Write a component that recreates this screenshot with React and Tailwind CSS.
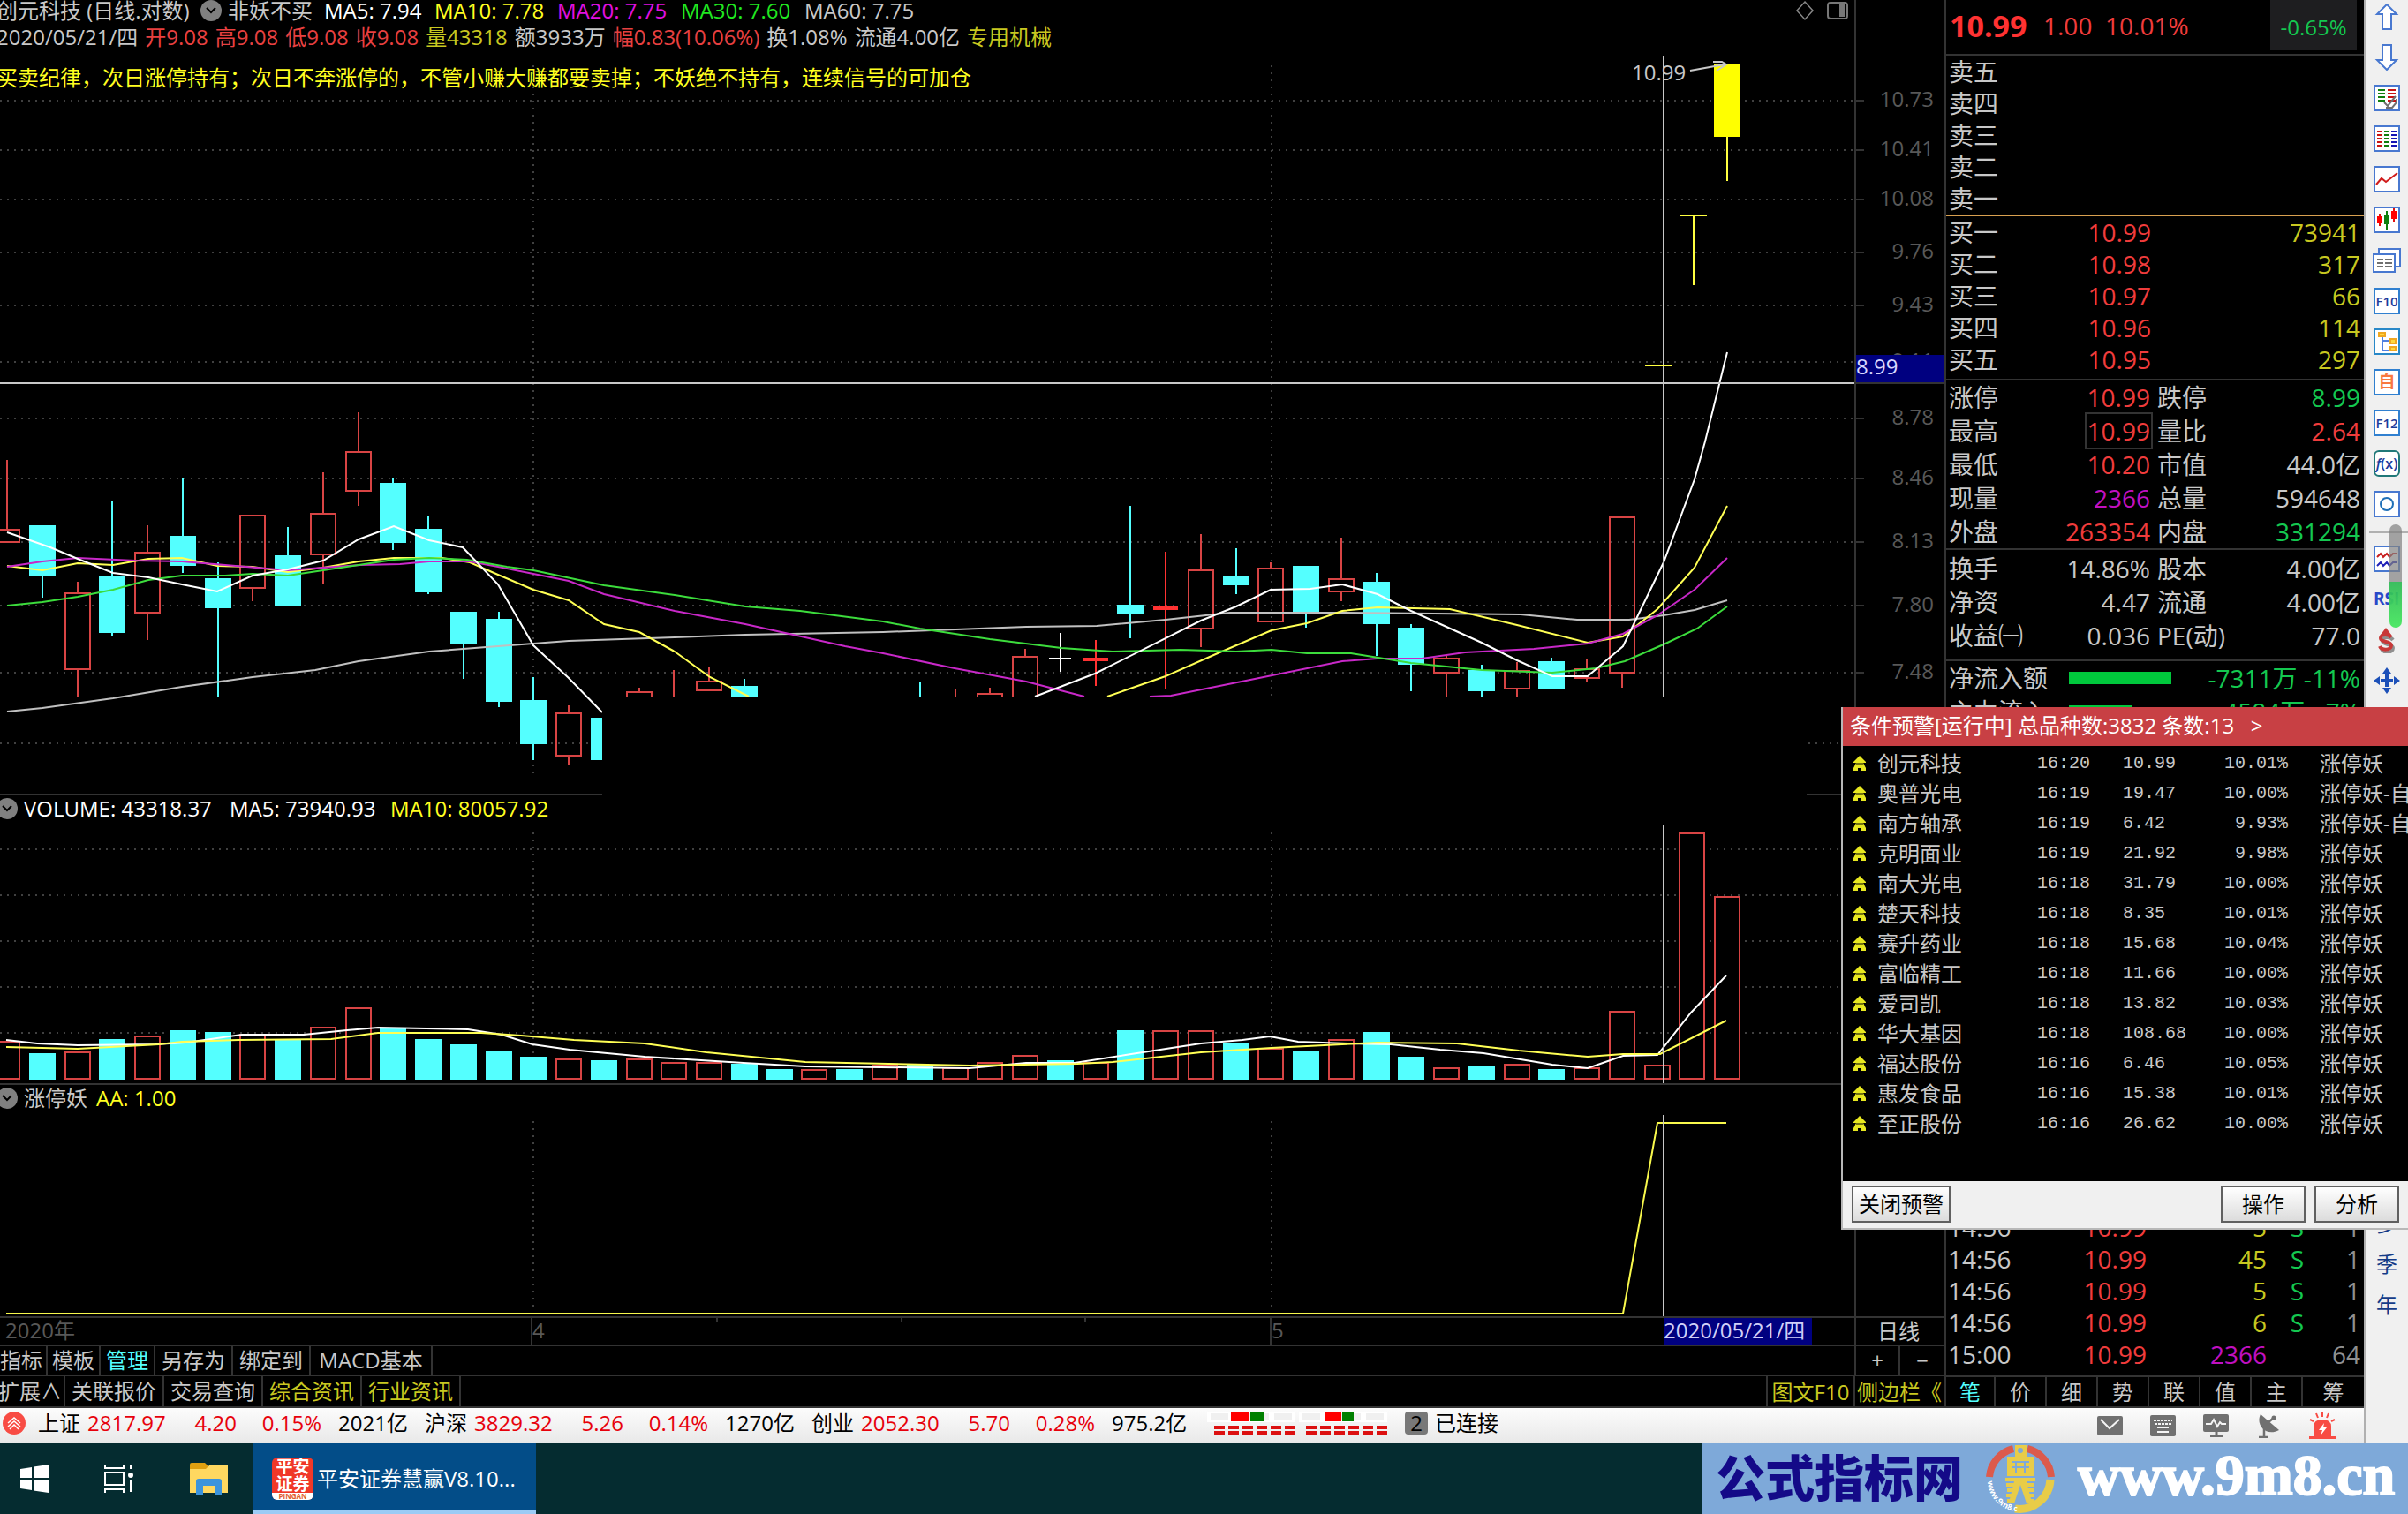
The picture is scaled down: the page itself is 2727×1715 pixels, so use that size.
import React from 'react';

const STEP = 39.76;
const cx = (i) => Math.round(8 + i * STEP);

// [slot, kind, high, bodyTop, bodyBottom, low]
const candles = [
    [0, 'r', 521, 600, 614, 614],
    [1, 'c', 595, 595, 653, 677],
    [2, 'r', 659, 672, 758, 789],
    [3, 'c', 567, 653, 717, 721],
    [4, 'r', 595, 626, 694, 725],
    [5, 'c', 541, 607, 641, 649],
    [6, 'c', 637, 655, 689, 789],
    [7, 'r', 584, 584, 666, 681],
    [8, 'c', 597, 629, 687, 687],
    [9, 'r', 535, 582, 628, 661],
    [10, 'r', 467, 512, 556, 573],
    [11, 'c', 541, 547, 615, 623],
    [12, 'c', 585, 599, 671, 673],
    [13, 'c', 693, 693, 729, 769],
    [14, 'c', 693, 701, 795, 801],
    [15, 'c', 767, 793, 843, 861],
    [16, 'r', 799, 808, 856, 867],
    [17, 'c', 813, 813, 861, 861],
    [18, 'r', 779, 784, 830, 830],
    [19, 'l', 759, 789, 789, 800],
    [20, 'r', 755, 772, 782, 782],
    [21, 'c', 769, 777, 820, 830],
    [26, 'c', 773, 800, 820, 830],
    [27, 'l', 781, 789, 789, 800],
    [28, 'r', 779, 786, 820, 820],
    [29, 'r', 735, 744, 820, 820],
    [30, 'w', 717, 746, 746, 761],
    [31, 'f', 725, 745, 749, 777],
    [32, 'c', 573, 685, 695, 723],
    [33, 'f', 625, 687, 691, 781],
    [34, 'r', 605, 646, 712, 733],
    [35, 'c', 621, 653, 663, 673],
    [36, 'r', 637, 644, 704, 704],
    [37, 'c', 641, 641, 693, 711],
    [38, 'r', 609, 656, 670, 681],
    [39, 'c', 649, 659, 707, 743],
    [40, 'c', 707, 711, 753, 783],
    [41, 'r', 743, 746, 762, 789],
    [42, 'c', 753, 759, 783, 789],
    [43, 'r', 750, 760, 780, 789],
    [44, 'c', 745, 749, 781, 781],
    [45, 'r', 747, 758, 768, 773],
    [46, 'r', 586, 586, 762, 779],
];

const volumes = [
    ['r', 1180], ['c', 1193], ['r', 1192], ['c', 1177], ['r', 1174], ['c', 1167], ['c', 1169], ['r', 1172], ['c', 1178], ['r', 1164],
    ['r', 1142], ['c', 1165], ['c', 1177], ['c', 1183], ['c', 1191], ['c', 1197], ['r', 1200], ['c', 1201], ['r', 1200], ['r', 1204],
    ['r', 1204], ['c', 1205], ['c', 1211], ['r', 1212], ['c', 1211], ['r', 1207], ['c', 1206], ['r', 1210], ['r', 1204], ['r', 1196],
    ['c', 1201], ['r', 1204], ['c', 1167], ['r', 1168], ['r', 1168], ['c', 1181], ['r', 1188], ['c', 1191], ['r', 1178], ['c', 1169],
    ['c', 1197], ['r', 1210], ['c', 1207], ['r', 1206], ['c', 1211], ['r', 1210], ['r', 1146], ['r', 1207], ['r', 944], ['r', 1016],
];

const ma5 = ['8,603 57,620 88,633 128,649 168,654 206,662 246,670 286,652 326,645 366,635 406,611 446,596 486,612 524,620 564,662 604,731 644,768 682,807', '1172,789 1240,763 1360,703 1400,687 1439,668 1484,667 1520,662 1560,673 1598,692 1678,728 1718,748 1758,766 1798,766 1838,732 1884,637 1919,543 1931,500 1956,399'];
const ma10 = ['8,641 48,646 88,638 128,640 168,633 206,632 246,641 286,642 326,648 366,643 406,636 446,632 501,632 532,637 564,651 604,668 644,680 684,707 724,716 764,738 804,767 848,789', '1254,789 1320,766 1379,740 1440,714 1480,706 1520,692 1560,688 1642,690 1718,708 1798,728 1838,721 1877,690 1919,643 1956,573'];
const ma20 = ['8,642 48,636 88,632 153,635 206,636 255,640 326,646 366,643 408,640 453,639 486,636 532,636 564,642 604,650 644,658 684,673 764,692 844,707 957,732 1000,740 1081,757 1162,772 1228,789', '1302,789 1326,788 1421,769 1520,749 1560,746 1610,746 1659,739 1737,735 1798,729 1838,718 1877,697 1919,668 1956,632'];
const ma30 = ['8,686 48,682 88,676 128,668 168,657 206,652 255,652 286,650 326,652 366,646 406,640 446,634 486,632 529,634 574,642 604,646 684,663 764,674 844,687 906,692 1000,704 1042,712 1121,724 1202,734 1260,738 1337,736 1400,738 1440,736 1480,740 1530,740 1598,751 1678,759 1758,762 1807,757 1840,749 1884,730 1922,712 1956,687'];
const ma60 = ['8,806 48,802 128,791 206,778 286,767 357,759 406,749 486,738 564,732 644,726 764,722 844,719 1000,716 1056,714 1162,710 1242,709 1320,702 1393,694 1520,694 1722,696 1786,702 1845,702 1884,697 1919,691 1956,680'];
const volMa5 = '7,1178 42,1182 88,1184 175,1183 210,1181 239,1177 274,1172 344,1172 393,1167 428,1164 530,1166 568,1172 603,1183 645,1189 730,1197 842,1204 912,1208 1098,1210 1162,1204 1217,1204 1281,1194 1360,1182 1407,1178 1438,1174 1470,1180 1526,1182 1575,1183 1631,1189 1680,1193 1758,1206 1798,1210 1838,1196 1877,1195 1915,1147 1955,1105';
const volMa10 = '7,1186 88,1188 180,1183 206,1180 270,1178 375,1177 428,1170 545,1170 590,1173 650,1178 730,1182 800,1192 912,1203 1050,1206 1098,1207 1220,1205 1260,1203 1360,1192 1440,1187 1520,1183 1560,1181 1650,1182 1720,1190 1798,1197 1838,1194 1880,1194 1955,1156';

const axis = [
    [114, '10.73'], [170, '10.41'], [226, '10.08'], [286, '9.76'], [346, '9.43'], [410, '9.11'],
    [474, '8.78'], [542, '8.46'], [614, '8.13'], [686, '7.80'], [762, '7.48'],
];

const stats = [
    ['涨停', '10.99', 'text-[#f03c3c]', '跌停', '8.99', 'text-[#14c850]'],
    ['最高', '10.99', 'text-[#f03c3c]', '量比', '2.64', 'text-[#f03c3c]'],
    ['最低', '10.20', 'text-[#f03c3c]', '市值', '44.0亿', ''],
    ['现量', '2366', 'text-[#c010c0]', '总量', '594648', ''],
    ['外盘', '263354', 'text-[#f03c3c]', '内盘', '331294', 'text-[#14c850]'],
];
const finance = [
    ['换手', '14.86%', '', '股本', '4.00亿', ''],
    ['净资', '4.47', '', '流通', '4.00亿', ''],
    ['收益㈠', '0.036', '', 'PE(动)', '77.0', ''],
];
const bids = [['买一', '10.99', '73941'], ['买二', '10.98', '317'], ['买三', '10.97', '66'], ['买四', '10.96', '114'], ['买五', '10.95', '297']];
const ticks = [
    ['14:56', '10.99', '5', 'S', '1'],
    ['14:56', '10.99', '45', 'S', '1'],
    ['14:56', '10.99', '5', 'S', '1'],
    ['14:56', '10.99', '6', 'S', '1'],
    ['15:00', '10.99', '2366', '', '64'],
];
const alerts = [
    ['创元科技', '16:20', '10.99', '10.01%', '涨停妖'],
    ['奥普光电', '16:19', '19.47', '10.00%', '涨停妖-自'],
    ['南方轴承', '16:19', '6.42', '9.93%', '涨停妖-自'],
    ['克明面业', '16:19', '21.92', '9.98%', '涨停妖'],
    ['南大光电', '16:18', '31.79', '10.00%', '涨停妖'],
    ['楚天科技', '16:18', '8.35', '10.01%', '涨停妖'],
    ['赛升药业', '16:18', '15.68', '10.04%', '涨停妖'],
    ['富临精工', '16:18', '11.66', '10.00%', '涨停妖'],
    ['爱司凯', '16:18', '13.82', '10.03%', '涨停妖'],
    ['华大基因', '16:18', '108.68', '10.00%', '涨停妖'],
    ['福达股份', '16:16', '6.46', '10.05%', '涨停妖'],
    ['惠发食品', '16:16', '15.38', '10.01%', '涨停妖'],
    ['至正股份', '16:16', '26.62', '10.00%', '涨停妖'],
];

const GRID = { stroke: '#404040', strokeWidth: 2, strokeDasharray: '2 6' };

const HLine = ({ y, to = 2100 }) => <line x1="0" x2={to} y1={y} y2={y} {...GRID} />;
const VLine = ({ x, y1, y2 }) => <line x1={x} x2={x} y1={y1} y2={y2} {...GRID} />;

const Candle = ({ slot, kind, high, top, bottom, low }) => {
    const x = cx(slot);
    const color = { r: '#d84444', c: '#54ffff', w: '#fff', f: '#ff3232', l: '#d84444' }[kind];
    return (
        <g stroke={color} strokeWidth="2" fill="none">
            {kind === 'r' ? (
                <>
                    <path d={`M${x} ${high}V${top}M${x} ${bottom}V${low}`} />
                    <rect x={x - 14} y={top} width="28" height={bottom - top} />
                </>
            ) : <path d={`M${x} ${high}V${low}`} />}
            {kind === 'c' && <rect x={x - 15} y={top} width="30" height={bottom - top} fill={color} stroke="none" />}
            {kind === 'w' && <path d={`M${x - 13} ${top}H${x + 12}`} />}
            {kind === 'f' && <path d={`M${x - 14} ${top + 2}H${x + 14}`} strokeWidth="4" />}
        </g>
    );
};

const Lines = ({ points, color }) => points.map((p) => (
    <polyline key={p} points={p} fill="none" stroke={color} strokeWidth="2" />
));

const PriceChart = () => (
    <svg className="block h-[901px] w-full" viewBox="0 0 2100 901" preserveAspectRatio="xMaxYMin slice">
        {axis.map(([y]) => <HLine key={y} y={y} />)}
        <HLine y={842} />
        <VLine x={604} y1={74} y2={876} />
        <VLine x={1440} y1={74} y2={789} />
        {candles.map(([slot, kind, high, top, bottom, low]) => (
            <Candle key={slot} slot={slot} kind={kind} high={high} top={top} bottom={bottom} low={low} />
        ))}
        <Lines points={ma60} color="#c0c0c0" />
        <Lines points={ma10} color="#ffff54" />
        <Lines points={ma20} color="#c828c8" />
        <Lines points={ma30} color="#3cdc3c" />
        <Lines points={ma5} color="#fff" />
        <path d="M0 434H2100M1884 63V789" stroke="#c8c8c8" strokeWidth="2" />
        <path d="M1863 414H1893M1903 244H1933M1918 244V323M1956 155V205" stroke="#ffff40" strokeWidth="2" />
        <rect x="1941" y="73" width="30" height="82" fill="#ff0" />
        <path d="M1914 80L1953 73M1940 70H1950L1955 73L1944 80" stroke="#c8c8c8" strokeWidth="2" fill="none" />
        <text x="1848" y="91" fontSize="24" fill="#c8c8c8">10.99</text>
        <rect x="682" y="789" width="1364" height="112" />
        <path d="M0 900H682M2046 900H2100" stroke="#333" strokeWidth="2" />
        <path d="M2044 2L2053 12L2044 22L2035 12Z" stroke="#888" strokeWidth="1.5" fill="none" />
        <rect x="2070" y="3" width="22" height="18" rx="3" stroke="#777" strokeWidth="2" fill="none" />
        <rect x="2083" y="5" width="6" height="14" fill="#777" />
    </svg>
);

const VolumeChart = () => (
    <svg className="block h-[328px] w-full" viewBox="0 901 2100 328" preserveAspectRatio="xMaxYMin slice">
        {[962, 1014, 1066, 1118, 1170].map((y) => <HLine key={y} y={y} />)}
        <VLine x={604} y1={943} y2={1222} />
        <VLine x={1440} y1={943} y2={1222} />
        {volumes.map(([kind, top], i) => (kind === 'c'
            ? <rect key={i} x={cx(i) - 15} y={top} width="30" height={1223 - top} fill="#54ffff" />
            : <rect key={i} x={cx(i) - 14} y={top} width="28" height={1222 - top} fill="#000" stroke="#d84444" strokeWidth="2" />
        ))}
        <Lines points={[volMa5]} color="#fff" />
        <Lines points={[volMa10]} color="#ffff54" />
        <path d="M1884 935V1227" stroke="#c8c8c8" strokeWidth="2" />
        <path d="M0 1228H2100" stroke="#333" strokeWidth="2" />
    </svg>
);

const SignalChart = () => (
    <svg className="block h-[264px] w-full" viewBox="0 1229 2100 264" preserveAspectRatio="xMaxYMin slice">
        <VLine x={604} y1={1270} y2={1485} />
        <VLine x={1440} y1={1270} y2={1485} />
        <path d="M7 1488H1838L1877 1272H1955" stroke="#f8f84c" strokeWidth="2" fill="none" />
        <path d="M1884 1263V1492" stroke="#c8c8c8" strokeWidth="2" />
        <path d="M0 1492H2100" stroke="#333" strokeWidth="2" />
    </svg>
);

const PriceAxis = () => (
    <svg className="block w-full flex-1" fontSize="24" textAnchor="end">
        {axis.map(([y, label]) => (
            <g key={y}>
                <path d={`M0 ${y}H9`} stroke="#333" strokeWidth="2" />
                <text x="88" y={y + 7} fill="#585858">{label}</text>
            </g>
        ))}
        <rect x="0" y="402" width="100" height="32" fill="#000080" />
        <path d="M0 434H100" stroke="#333" strokeWidth="2" />
        <text x="0" y="424" textAnchor="start" fill="#d8d8ff">8.99</text>
    </svg>
);

const Toggle = () => (
    <button aria-label="指标菜单" className="flex size-6 shrink-0 items-center justify-center rounded-full bg-[#808080]">
        <svg width="12" height="8" viewBox="0 0 12 8" fill="none" stroke="#000" strokeWidth="2"><path d="M1 1L6 6L11 1" /></svg>
    </button>
);

const Pair = ({ row, boxed }) => (
    <div className="flex h-[38px] items-center">
        <span className="w-[90px] shrink-0 whitespace-nowrap">{row[0]}</span>
        <span className={`flex w-[138px] shrink-0 justify-end ${row[2]}`}>
            <span className={boxed ? 'outline-2 outline-offset-1 outline-[#333]' : ''}>{row[1]}</span>
        </span>
        <span className="ml-2 flex-1">{row[3]}</span>
        <span className={row[5]}>{row[4]}</span>
    </div>
);

const QuotePanel = () => (
    <section className="flex w-[475px] shrink-0 flex-col border-l-2 border-[#333] text-[28px] leading-9 text-[#c8c8c8]">
        <header className="flex h-[63px] items-center border-b-2 border-[#333] pb-1 pl-1 text-[#f03c3c]">
            <b className="w-[106px] text-[34px] text-[#ff3232]">10.99</b>
            <span className="w-[70px]">1.00</span>
            <span>10.01%</span>
            <span className="mr-2 ml-auto flex h-[57px] w-[98px] items-center justify-center self-start bg-[#1e1e20] pt-1 text-[24px] text-[#14c850]">-0.65%</span>
        </header>
        <div className="border-b-2 border-[#d8a050] pl-[3px]">
            {['卖五', '卖四', '卖三', '卖二', '卖一'].map((t) => <div key={t} className="h-9">{t}</div>)}
        </div>
        <table className="mb-1 w-full">
            <tbody>
                {bids.map(([name, price, vol]) => (
                    <tr key={name} className="h-9">
                        <td className="w-[90px] pl-[3px]">{name}</td>
                        <td className="w-[142px] text-right text-[#f03c3c]">{price}</td>
                        <td className="pr-1 text-right text-[#c8c820]">{vol}</td>
                    </tr>
                ))}
            </tbody>
        </table>
        <div className="border-y-2 border-[#333] pr-1 pl-[3px]">
            {stats.map((row) => <Pair key={row[0]} row={row} boxed={row[0] === '最高'} />)}
        </div>
        <div className="border-b-2 border-[#333] pt-[2px] pr-1 pb-2 pl-[3px]">
            {finance.map((row) => <Pair key={row[0]} row={row} />)}
        </div>
        <div className="pr-1 pl-[3px]">
            <div className="flex h-[38px] items-center">
                <span className="w-[136px]">净流入额</span>
                <span className="h-[14px] w-[116px] bg-[#00c83c]" />
                <span className="ml-auto text-[#14c850]">-7311万 -11%</span>
            </div>
            <div className="flex h-[38px] items-center">
                <span className="w-[136px]">主力流入</span>
                <span className="h-[14px] w-[72px] bg-[#00c83c]" />
                <span className="ml-auto text-[#14c850]">-4584万&nbsp; -7%</span>
            </div>
        </div>
        <table className="mt-auto mb-[6px] w-full">
            <tbody>
                {ticks.map(([time, price, vol, side, n], i) => (
                    <tr key={i} className="h-9">
                        <td className="w-[90px] pl-[2px]">{time}</td>
                        <td className="w-[137px] text-right text-[#f03c3c]">{price}</td>
                        <td className={`w-[136px] text-right ${side ? 'text-[#c8c820]' : 'text-[#c010c0]'}`}>{vol}</td>
                        <td className="w-[42px] text-right text-[#14c850]">{side}</td>
                        <td className="pr-1 text-right text-[#909090]">{n}</td>
                    </tr>
                ))}
            </tbody>
        </table>
        <nav className="flex h-[37px] border-y-2 border-[#333] text-[24px] leading-8">
            {['笔', '价', '细', '势', '联', '值', '主', '筹'].map((t, i) => (
                <button key={t} className={`border-[#333] ${i === 0 ? 'w-14 text-[#54ffff]' : 'w-[58px]'} ${i === 7 ? 'flex-1' : 'border-r-2'}`}>{t}</button>
            ))}
        </nav>
    </section>
);

const tabsTop = [['指标', 'w-[54px] pr-1'], ['模板', 'w-[60px]'], ['管理', 'w-[62px] text-[#54ffff]'], ['另存为', 'w-[88px]'], ['绑定到', 'w-[88px]'], ['MACD基本', 'w-[138px]']];
const tabsBottom = [['扩展∧', 'w-[74px] pr-1'], ['关联报价', 'w-[112px]'], ['交易查询', 'w-[112px]'], ['综合资讯', 'w-[112px] text-[#c8c820]'], ['行业资讯', 'w-[112px] text-[#c8c820]']];

const TabRow = ({ tabs }) => tabs.map(([t, cls]) => (
    <button key={t} className={`flex shrink-0 items-center justify-center border-r-2 border-[#333] whitespace-nowrap ${cls}`}>{t}</button>
));

// --- toolbar glyphs, each on a 30x30 canvas ---
const Frame = ({ children, color = '#4878d0' }) => (
    <svg width="30" height="30" viewBox="0 0 30 30" fill="none">
        <rect x="1" y="1" width="28" height="28" fill="#fff" stroke={color} strokeWidth="2" />
        {children}
    </svg>
);
const Glyph = ({ children, color = '#1c3c9c', size = '17', weight = '400', rounded }) => (
    <span className={`flex size-[30px] items-center justify-center border-2 bg-white ${rounded ? 'rounded-md border-[#207878]' : 'border-[#3080d0]'}`}>
        <svg width="26" height="26" viewBox="0 0 26 26"><text x="13" y="19" textAnchor="middle" fontSize={size} fontWeight={weight} fill={color}>{children}</text></svg>
    </span>
);
const dashes = (xs, ys, color, w) => ys.map((y) => xs.map((x) => <rect key={`${x}-${y}`} x={x} y={y} width={w} height="2" fill={color} />));

const tools = [
    ['上移', <svg width="30" height="30" viewBox="0 0 30 30"><path d="M15 1L26 12H20V29H10V12H4Z" fill="#fff" stroke="#4878d0" strokeWidth="2" /></svg>],
    ['下移', <svg width="30" height="30" viewBox="0 0 30 30"><path d="M15 29L26 18H20V1H10V18H4Z" fill="#fff" stroke="#4878d0" strokeWidth="2" /></svg>],
    ['选股', <Frame>{dashes([5], [5, 9, 13, 17], '#108010', 8)}{dashes([16], [5, 9, 13, 17], '#c81414', 9)}<path d="M12 20L16 24L25 13M14 26H21L26 20V16" stroke="#707070" strokeWidth="2" /></Frame>],
    ['报价', <Frame>{dashes([4], [6, 10, 14, 18, 22], '#c81414', 6)}{dashes([12], [6, 10, 14, 18, 22], '#108010', 6)}{dashes([20], [6, 10, 14, 18, 22], '#1414b4', 6)}</Frame>],
    ['分时', <Frame><path d="M3 21L9 14L14 18L27 8" stroke="#d01c1c" strokeWidth="2" /></Frame>],
    ['K线', <Frame><path d="M7 8V22M23 2V18" stroke="#e01010" strokeWidth="2" /><path d="M15 5V26" stroke="#108010" strokeWidth="2" /><path d="M4 11H10V19H4ZM20 5H26V14H20Z" fill="#f00" /><path d="M12 9H18V20H12Z" fill="#108010" /></Frame>],
    ['多窗', <svg width="32" height="30" viewBox="0 0 32 30" fill="#fff" stroke="#4878d0" strokeWidth="2"><path d="M7 2H31V22H7Z" /><path d="M1 8H25V28H1Z" /><path d="M5 14H12M14 14H22M5 18H12M14 18H22M5 22H12M14 22H22" stroke="#707070" /></svg>],
    ['F10资料', <Glyph size="15" weight="600">F10</Glyph>],
    ['板块树', <Frame color="#2888c8"><path d="M10 10V25H18M10 14H18" stroke="#5080e0" strokeWidth="2" /><path d="M6 5H13V9H6ZM19 12H25V17H19ZM19 21H25V25H19Z" fill="#ffd840" stroke="#f0a820" strokeWidth="2" /></Frame>],
    ['自选', <Glyph color="#f87840" size="19" weight="700">自</Glyph>],
    ['F12交易', <Glyph size="15" weight="600">F12</Glyph>],
    ['公式', <Glyph rounded size="16" weight="600"><tspan fontStyle="italic">f</tspan>(x)</Glyph>],
    ['画线', <Frame><circle cx="15" cy="15" r="7" stroke="#2070b8" strokeWidth="2" /></Frame>],
];
const toolsLow = [
    ['指标线', <Frame><path d="M4 13L8 9L11 13L15 9L18 13L22 9L26 9" stroke="#c82020" strokeWidth="2" /><path d="M4 23L8 19L11 23L15 19L18 23L22 19L26 19" stroke="#2020b8" strokeWidth="2" /></Frame>],
    ['RSI', <svg width="30" height="30" viewBox="0 0 30 30"><text x="0" y="21" fontSize="19" fontWeight="700" fill="#2848c8">RSI</text></svg>],
    ['资金', <svg width="30" height="30" viewBox="0 0 30 30"><path d="M8 9L14 1L20 9Z" fill="#c83838" /><path d="M20 13C17 9 8 9 8 14C8 19 20 17 20 22C20 28 9 28 7 23" fill="none" stroke="#909090" strokeWidth="4" transform="translate(2 2)" /><path d="M20 12C17 8 8 8 8 13C8 18 20 16 20 21C20 27 9 27 7 22" fill="none" stroke="#c83838" strokeWidth="4" /></svg>],
    ['移动', <svg width="30" height="30" viewBox="0 0 30 30" fill="#1c50b8"><path d="M15 0L20 7H10ZM15 30L20 23H10ZM0 15L7 10V20ZM30 15L23 10V20Z" /><path d="M13 8H17V13H22V17H17V22H13V17H8V13H13Z" /></svg>],
];

const ToolButton = ({ label, children }) => (
    <button aria-label={label} className="flex h-[46px] w-full items-center justify-center">{children}</button>
);

const Toolbar = () => (
    <aside className="relative flex w-[50px] shrink-0 flex-col border-l-2 border-[#b0b0b0] bg-[#f0f0f0] pl-1 text-[24px] text-[#143c88]">
        <div className="-mt-1 pr-1">
            {tools.map(([label, icon]) => <ToolButton key={label} label={label}>{icon}</ToolButton>)}
        </div>
        <div className="mt-2 border-t-2 border-[#b0b0b0] pt-[6px] pr-1">
            {toolsLow.map(([label, icon]) => <ToolButton key={label} label={label}>{icon}</ToolButton>)}
        </div>
        <div className="mt-auto pr-1 pb-[134px]">
            {['多', '季', '年'].map((t) => <ToolButton key={t} label={t}>{t}</ToolButton>)}
        </div>
        {/* floating meter */}
        <div className="absolute top-[594px] right-[7px] flex h-[117px] w-[14px] flex-col overflow-hidden rounded-full">
            <span className="h-[65px] bg-[#808080]/70" />
            <span className="flex-1 bg-linear-to-b from-[#28b850]/90 to-[#50e868]" />
        </div>
    </aside>
);

const AlertWindow = () => (
    <section className="absolute top-[801px] right-0 w-[642px] overflow-hidden border-b-2 border-l-2 border-[#b8b8b8] bg-black">
        <h2 className="-ml-0.5 h-11 bg-[#c84044] pl-[10px] text-[24px] leading-[42px] whitespace-pre text-white">条件预警[运行中] 总品种数:3832 条数:13   &gt;</h2>
        <table className="mt-[3px] mb-12 w-[700px] table-fixed text-[24px] leading-[34px] text-[#c8c8c8]">
            <tbody>
                {alerts.map(([name, time, price, pct, tag]) => (
                    <tr key={name} className="h-[34px]">
                        <td className="w-[39px] pl-3">
                            <svg width="15" height="18" viewBox="0 0 15 18" fill="#e8e820"><path d="M7 0L14 7V8H11L14 14V17H9V14H5V17H0V14L3 8H0V7Z" /><path d="M3 9H11" stroke="#000" /></svg>
                        </td>
                        <td className="w-[181px]">{name}</td>
                        <td className="w-[97px] font-['Liberation_Mono',monospace] text-[20px]">{time}</td>
                        <td className="w-[97px] font-['Liberation_Mono',monospace] text-[20px]">{price}</td>
                        <td className="w-[90px] text-right font-['Liberation_Mono',monospace] text-[20px]">{pct}</td>
                        <td className="pl-9 whitespace-nowrap">{tag}</td>
                    </tr>
                ))}
            </tbody>
        </table>
        <footer className="flex h-[53px] items-center bg-[#f0f0f0] px-[10px] pb-[2px] text-[24px] text-black">
            <button className="h-[42px] w-28 border-2 border-[#606060] bg-linear-to-b from-white to-[#dcdcdc] leading-9">关闭预警</button>
            <button className="ml-auto h-[42px] w-24 border-2 border-[#606060] bg-linear-to-b from-white to-[#dcdcdc] leading-9">操作</button>
            <button className="ml-[10px] h-[42px] w-24 border-2 border-[#606060] bg-linear-to-b from-white to-[#dcdcdc] leading-9">分析</button>
        </footer>
    </section>
);

const indexes = [
    ['上证', '2817.97', '4.20', '0.15%', '2021亿'],
    ['沪深', '3829.32', '5.26', '0.14%', '1270亿'],
    ['创业', '2052.30', '5.70', '0.28%', '975.2亿'],
];

const Meter = ({ x, red, green }) => (
    <g>
        <rect x={x} y="1" width="100" height="12" fill="#fff" />
        {[4, 30, 50, 76].map((d) => <rect key={d} x={x + d} y="3" width="20" height="8" fill="#f0f0f0" />)}
        <rect x={x + red[0]} y="2" width={red[1]} height="10" fill="#f00" />
        <rect x={x + green[0]} y="2" width={green[1]} height="10" fill="#008000" />
        {[17, 23].map((y) => [0, 1, 2, 3, 4, 5].map((i) => <rect key={`${y}${i}`} x={x + 8 + i * 16} y={y} width="12" height="4" fill="#dc1010" />))}
    </g>
);

const StatusBar = () => (
    <footer className="flex h-10 items-center bg-linear-to-b from-[#fcfcfc] to-[#e8e8e8] pr-8 pb-[6px] pl-[3px] text-[24px] leading-8 whitespace-nowrap text-black">
        <svg className="mr-[14px] shrink-0" width="26" height="26" viewBox="0 0 26 26" fill="none">
            <circle cx="13" cy="13" r="13" fill="#f84c44" />
            <path d="M6 13L13 7L20 13M6 17L13 11L20 17M8 20L13 15L18 20" stroke="#fff" strokeWidth="1.5" />
        </svg>
        {indexes.map(([name, value, diff, pct, amount]) => (
            <div key={name} className="flex">
                <span className="w-14">{name}</span>
                <span className="w-[88px] text-red-600">{value}</span>
                <span className="w-[81px] text-right text-red-600">{diff}</span>
                <span className="w-24 text-right text-red-600">{pct}</span>
                <span className="w-[117px] pl-[19px]">{amount}</span>
            </div>
        ))}
        <svg className="ml-[10px] shrink-0" width="206" height="28" viewBox="0 0 206 28">
            <Meter x={0} red={[27, 21]} green={[49, 15]} />
            <Meter x={104} red={[30, 18]} green={[49, 13]} />
        </svg>
        <span className="ml-[18px] h-[26px] w-[26px] rounded bg-[#787878] text-center leading-[26px]">2</span>
        <span className="ml-2">已连接</span>
        <div className="mt-[6px] ml-auto flex items-center gap-[31px] text-[#707070]">
            <svg width="29" height="24" viewBox="0 0 29 24"><rect y="1" width="29" height="22" rx="2" fill="currentColor" /><path d="M4 5L14 15L25 5" stroke="#f4f4f4" strokeWidth="2" fill="none" /></svg>
            <svg width="29" height="24" viewBox="0 0 29 24"><rect width="29" height="24" rx="2" fill="currentColor" /><path d="M4 6H25M5 10H24" stroke="#f4f4f4" strokeWidth="2" strokeDasharray="3 1" /><path d="M8 14H21M8 19H21" stroke="#f4f4f4" strokeWidth="2" /></svg>
            <svg width="29" height="26" viewBox="0 0 29 26"><rect width="29" height="20" rx="2" fill="currentColor" /><path d="M3 11H9L12 6L16 14L19 9L21 11H26" stroke="#f4f4f4" strokeWidth="2" fill="none" /><path d="M15 20V25M8 25H22" stroke="currentColor" strokeWidth="3" /></svg>
            <svg width="29" height="28" viewBox="0 0 29 28" fill="currentColor"><path d="M5 1C-1 13 11 27 26 19Z" /><path d="M14 10L20 5M9 18V26M3 27H14" stroke="currentColor" strokeWidth="2.500" /><circle cx="20" cy="5" r="2.500" /></svg>
            <svg width="30" height="30" viewBox="0 0 30 30" fill="#f84c44"><path d="M5 27V16Q5 8 15 8Q25 8 25 16V27Z" /><rect y="27" width="30" height="3" /><path d="M15 0V5M8 1L10 6M22 1L20 6M1 8L5 10M29 8L25 10" stroke="#f84c44" strokeWidth="2" /><path d="M17 12L11 20H15L13 26L20 17H16Z" fill="#fff" /></svg>
        </div>
    </footer>
);

const Taskbar = () => (
    <div className="flex h-20 items-center bg-[#052c30] text-[24px] text-white">
        <button aria-label="开始" className="flex w-[78px] justify-center">
            <svg width="32" height="32" viewBox="0 0 32 32" fill="#fff"><path d="M0 5L13 3V15H0ZM15 2.500L32 0V15H15ZM0 17H13V29L0 27ZM15 17H32V32L15 29.500Z" /></svg>
        </button>
        <button aria-label="任务视图" className="ml-10 flex w-[34px]">
            <svg width="34" height="32" viewBox="0 0 34 32" fill="none" stroke="#fff" strokeWidth="2"><path d="M1 0V4H22V0M1 32V28H22V32M1 9H22V23H1ZM30 0V5M30 17V31" /><circle cx="30" cy="12" r="2" fill="#fff" /></svg>
        </button>
        <button aria-label="文件资源管理器" className="ml-[63px] flex w-[43px]">
            <svg width="43" height="36" viewBox="0 0 43 36"><path d="M0 2Q0 0 2 0H17L21 4H41Q43 4 43 6V12H0Z" fill="#e0a010" /><path d="M0 7H18L22 3H43V34H0Z" fill="#ffd860" /><path d="M7 36V21Q7 18 10 18H33Q36 18 36 21V36H28V26H15V36Z" fill="#3c94dc" /></svg>
        </button>
        <button className="ml-[29px] flex h-full w-80 items-center border-b-4 border-[#9ccbf5] bg-[#034d88] pt-1 pl-[21px]">
            <span className="flex h-12 w-[47px] shrink-0 flex-col items-center overflow-hidden rounded-md bg-[#f03828] text-[19px] leading-5 font-bold">
                <span>平安</span>
                <span>证券</span>
                <span className="h-2 w-full bg-white text-[8px] leading-2 text-[#e06030]">PINGAN</span>
            </span>
            <span className="ml-1 whitespace-nowrap">平安证券慧赢V8.10...</span>
        </button>
        <div className="ml-auto flex h-full w-[800px] items-center bg-[#7ea9d9]">
            <span className="ml-4 pb-1 text-[56px] leading-none font-black text-[#140a88]">公式指标网</span>
            <svg className="ml-[26px] shrink-0" width="78" height="78" viewBox="0 0 78 78" fill="none">
                <path d="M4 37A36 36 0 0 1 31 5M47 5A36 36 0 0 1 74 37" stroke="#dc5a4c" strokeWidth="8" />
                <path d="M73 40A35 35 0 0 1 33 73" stroke="#e8cc48" strokeWidth="9" />
                <path id="ring" d="M2 42A36 36 0 0 0 34 76" />
                <text fontSize="9" fontWeight="700" fill="#fff"><textPath href="#ring">www.9m8.cn</textPath></text>
                <path d="M33 1H46V14H54V36H24V14H33Z" fill="#e8cc48" />
                <circle cx="39" cy="7" r="3" fill="#7ea9d9" />
                <path d="M29 20H49M34 20V32M44 20V32M29 26H49" stroke="#7ea9d9" strokeWidth="2" />
                <path d="M22 40H56M23 46H55M24 52H54M23 58H55M24 64H54" stroke="#e8cc48" strokeWidth="4" />
                <path d="M33 38H45L52 66H26Z" fill="#e8cc48" />
                <path d="M39 46L46 67H32Z" fill="#7ea9d9" />
            </svg>
            <span className="ml-[26px] pb-2 font-['Liberation_Serif',serif] text-[66px] leading-none font-bold [-webkit-text-stroke:2px_white]">www.9m8.cn</span>
        </div>
    </div>
);

const App = () => (
    <div className="relative flex min-h-screen flex-col overflow-hidden bg-black font-['Open_Sans','Noto_Sans_CJK_SC',sans-serif] text-[#c8c8c8]">
        <div className="flex flex-1">
            <div className="flex min-w-0 flex-1 flex-col">
                <div className="flex flex-1">
                    <main className="flex min-w-0 flex-1 flex-col text-[24px] whitespace-nowrap">
                        <div className="flex flex-1">
                            <div className="min-w-0 flex-1">
                                <div className="relative">
                                    <PriceChart />
                                    <div className="absolute inset-x-0 top-0">
                                        <div className="-ml-1 flex h-6 items-center gap-[7px] leading-6">
                                            <h1 className="w-[224px]">创元科技 (日线.对数)</h1>
                                            <Toggle />
                                            <span className="w-[102px]">非妖不买</span>
                                            <span className="w-[118px] text-white">MA5: 7.94</span>
                                            <span className="w-[132px] text-[#ffff20]">MA10: 7.78</span>
                                            <span className="w-[133px] text-[#e010e0]">MA20: 7.75</span>
                                            <span className="w-[133px] text-[#20e820]">MA30: 7.60</span>
                                            <span>MA60: 7.75</span>
                                        </div>
                                        <div className="-ml-1 flex h-9 items-center gap-2">
                                            <span>2020/05/21/四</span>
                                            <span className="text-[#e84040]">开9.08</span>
                                            <span className="text-[#e84040]">高9.08</span>
                                            <span className="text-[#e84040]">低9.08</span>
                                            <span className="text-[#e84040]">收9.08</span>
                                            <span className="text-[#c8c820]">量43318</span>
                                            <span>额3933万</span>
                                            <span className="text-[#e84040]">幅0.83(10.06%)</span>
                                            <span>换1.08%</span>
                                            <span>流通4.00亿</span>
                                            <span className="text-[#c8c820]">专用机械</span>
                                        </div>
                                        <p className="-ml-1 pt-[10px] text-[#ffff20]">买卖纪律，次日涨停持有；次日不奔涨停的，不管小赚大赚都要卖掉；不妖绝不持有，连续信号的可加仓</p>
                                    </div>
                                </div>
                                <div className="relative">
                                    <VolumeChart />
                                    <div className="absolute top-0 -left-1 flex h-[30px] items-center gap-[7px]">
                                        <Toggle />
                                        <span className="w-[226px] text-white">VOLUME: 43318.37</span>
                                        <span className="w-[175px] text-white">MA5: 73940.93</span>
                                        <span className="text-[#ffff20]">MA10: 80057.92</span>
                                    </div>
                                </div>
                                <div className="relative">
                                    <SignalChart />
                                    <div className="absolute top-0 -left-1 flex h-[30px] items-center gap-[7px]">
                                        <Toggle />
                                        <span className="w-[75px]">涨停妖</span>
                                        <span className="text-[#ffff20]">AA: 1.00</span>
                                    </div>
                                </div>
                            </div>
                            <div className="flex w-[102px] shrink-0 border-b-2 border-l-2 border-[#333]">
                                <PriceAxis />
                            </div>
                        </div>
                        <div className="flex h-8 border-b-2 border-[#333] leading-7">
                            <div className="relative flex min-w-0 flex-1 text-[#585858]">
                                <span className="w-[603px] border-r-2 border-[#333] pl-[6px]">2020年</span>
                                <span>4</span>
                                <svg className="absolute top-0 left-[811px]" width="420" height="6" stroke="#333" strokeWidth="2"><path d="M1 0V5M210 0V5M418 0V5" /></svg>
                                <span className="ml-auto w-[446px] border-l-2 border-[#333]">5</span>
                                <time className="w-[168px] bg-[#000080] text-[#d0d0f8]">2020/05/21/四</time>
                                <span className="w-12" />
                            </div>
                            <button className="w-[102px] shrink-0 border-l-2 border-[#333] pr-1">日线</button>
                        </div>
                        <div className="flex h-[34px] border-b-2 border-[#333]">
                            <TabRow tabs={tabsTop} />
                            <button aria-label="放大" className="ml-auto w-[52px] border-x-2 border-[#333] leading-8">+</button>
                            <button aria-label="缩小" className="w-[50px] leading-8">−</button>
                        </div>
                        <div className="flex h-[36px] border-b-2 border-[#333]">
                            <TabRow tabs={tabsBottom} />
                            <button className="ml-auto w-[101px] border-x-2 border-[#333] text-[#c8c820]">图文F10</button>
                            <button className="w-[101px] overflow-hidden pl-[2px] text-left text-[#c8c820]">侧边栏《</button>
                        </div>
                    </main>
                    <QuotePanel />
                </div>
                <StatusBar />
            </div>
            <Toolbar />
        </div>
        <Taskbar />
        <AlertWindow />
    </div>
);

export default App;
